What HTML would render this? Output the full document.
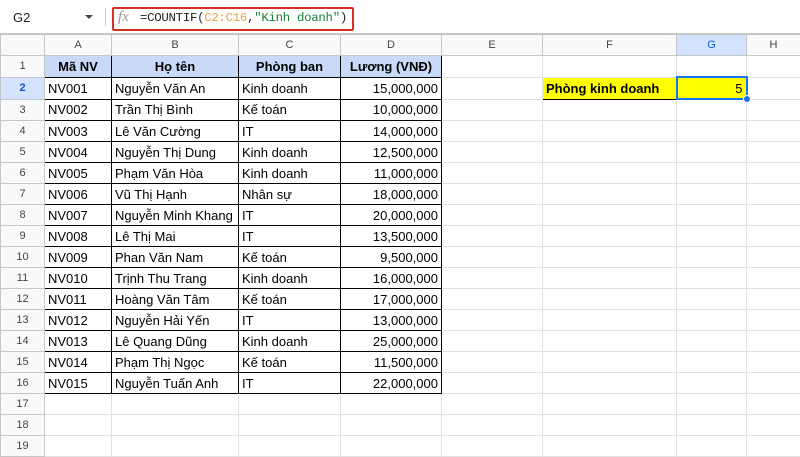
<!DOCTYPE html><html><head><meta charset="utf-8"><style>
body{margin:0;width:800px;height:450px;overflow:hidden;background:#fff;font-family:"Liberation Sans",Arial,sans-serif;position:relative}
.tb{position:absolute;left:0;top:0;width:800px;height:33px;background:#fff;border-bottom:1px solid #c4c7c5}
table{position:absolute;left:0;top:34px;border-collapse:collapse;table-layout:fixed;width:800px}
td{border:1px solid #e1e1e1;height:20px;padding:0 3px;font-size:13px;color:#000;white-space:nowrap;overflow:hidden}
tr.h td{height:20px;background:#f8f9fa;color:#444;font-size:11px;text-align:center;border-color:#c4c7c5}
td.r{background:#f8f9fa;color:#444;font-size:11px;text-align:center;border-color:#c4c7c5;padding:0}
td.b{border:1px solid #000}
td.hd{background:#c9daf8;font-weight:bold;text-align:center;border:1px solid #000}
.n{text-align:right}
</style></head><body>
<div class="tb">
<div style="position:absolute;left:13px;top:10px;font-size:13px;color:#222">G2</div>
<div style="position:absolute;left:85px;top:15px;width:0;height:0;border-left:4px solid transparent;border-right:4px solid transparent;border-top:4px solid #444"></div>
<div style="position:absolute;left:105px;top:8px;width:1px;height:18px;background:#ccc"></div>
<div style="position:absolute;left:112px;top:7px;width:238px;height:20px;border:2px solid #d93025;border-radius:2px"></div>
<div style="position:absolute;left:118px;top:9px;font-family:'Liberation Serif',serif;font-style:italic;color:#999;font-size:15px">fx</div>
<div style="position:absolute;left:140px;top:11px;font-family:'Liberation Mono',monospace;font-size:12.4px;color:#222;letter-spacing:-0.3px">=COUNTIF(<span style="color:#e8a33d">C2:C16</span>,<span style="color:#188038">"Kinh doanh"</span>)</div>
</div>
<table>
<colgroup><col style="width:44px"><col style="width:67px"><col style="width:127px"><col style="width:102px"><col style="width:101px"><col style="width:101px"><col style="width:134px"><col style="width:70px"><col style="width:54px"></colgroup>
<tr class="h"><td></td><td>A</td><td>B</td><td>C</td><td>D</td><td>E</td><td>F</td><td style="background:#d3e3fd;color:#0b57d0">G</td><td>H</td></tr>
<tr><td class="r">1</td><td class="hd">Mã NV</td><td class="hd">Họ tên</td><td class="hd">Phòng ban</td><td class="hd">Lương (VNĐ)</td><td></td><td></td><td></td><td></td></tr>
<tr><td class="r" style="background:#d3e3fd;color:#0b57d0;font-weight:bold">2</td><td class="b">NV001</td><td class="b">Nguyễn Văn An</td><td class="b">Kinh doanh</td><td class="b n">15,000,000</td><td></td><td style="background:#ffff00;border:1px solid #000;font-weight:bold">Phòng kinh doanh</td><td style="background:#ffff00;border:2px solid #1a73e8;text-align:right;position:relative;overflow:visible">5<div style="position:absolute;right:-5px;bottom:-5px;width:6px;height:6px;border-radius:50%;background:#1a73e8;border:1px solid #fff"></div></td><td></td></tr>
<tr><td class="r">3</td><td class="b">NV002</td><td class="b">Trần Thị Bình</td><td class="b">Kế toán</td><td class="b n">10,000,000</td><td></td><td></td><td></td><td></td></tr>
<tr><td class="r">4</td><td class="b">NV003</td><td class="b">Lê Văn Cường</td><td class="b">IT</td><td class="b n">14,000,000</td><td></td><td></td><td></td><td></td></tr>
<tr><td class="r">5</td><td class="b">NV004</td><td class="b">Nguyễn Thị Dung</td><td class="b">Kinh doanh</td><td class="b n">12,500,000</td><td></td><td></td><td></td><td></td></tr>
<tr><td class="r">6</td><td class="b">NV005</td><td class="b">Phạm Văn Hòa</td><td class="b">Kinh doanh</td><td class="b n">11,000,000</td><td></td><td></td><td></td><td></td></tr>
<tr><td class="r">7</td><td class="b">NV006</td><td class="b">Vũ Thị Hạnh</td><td class="b">Nhân sự</td><td class="b n">18,000,000</td><td></td><td></td><td></td><td></td></tr>
<tr><td class="r">8</td><td class="b">NV007</td><td class="b">Nguyễn Minh Khang</td><td class="b">IT</td><td class="b n">20,000,000</td><td></td><td></td><td></td><td></td></tr>
<tr><td class="r">9</td><td class="b">NV008</td><td class="b">Lê Thị Mai</td><td class="b">IT</td><td class="b n">13,500,000</td><td></td><td></td><td></td><td></td></tr>
<tr><td class="r">10</td><td class="b">NV009</td><td class="b">Phan Văn Nam</td><td class="b">Kế toán</td><td class="b n">9,500,000</td><td></td><td></td><td></td><td></td></tr>
<tr><td class="r">11</td><td class="b">NV010</td><td class="b">Trịnh Thu Trang</td><td class="b">Kinh doanh</td><td class="b n">16,000,000</td><td></td><td></td><td></td><td></td></tr>
<tr><td class="r">12</td><td class="b">NV011</td><td class="b">Hoàng Văn Tâm</td><td class="b">Kế toán</td><td class="b n">17,000,000</td><td></td><td></td><td></td><td></td></tr>
<tr><td class="r">13</td><td class="b">NV012</td><td class="b">Nguyễn Hải Yến</td><td class="b">IT</td><td class="b n">13,000,000</td><td></td><td></td><td></td><td></td></tr>
<tr><td class="r">14</td><td class="b">NV013</td><td class="b">Lê Quang Dũng</td><td class="b">Kinh doanh</td><td class="b n">25,000,000</td><td></td><td></td><td></td><td></td></tr>
<tr><td class="r">15</td><td class="b">NV014</td><td class="b">Phạm Thị Ngọc</td><td class="b">Kế toán</td><td class="b n">11,500,000</td><td></td><td></td><td></td><td></td></tr>
<tr><td class="r">16</td><td class="b">NV015</td><td class="b">Nguyễn Tuấn Anh</td><td class="b">IT</td><td class="b n">22,000,000</td><td></td><td></td><td></td><td></td></tr>
<tr><td class="r">17</td><td></td><td></td><td></td><td></td><td></td><td></td><td></td><td></td></tr>
<tr><td class="r">18</td><td></td><td></td><td></td><td></td><td></td><td></td><td></td><td></td></tr>
<tr><td class="r">19</td><td></td><td></td><td></td><td></td><td></td><td></td><td></td><td></td></tr>
</table>
</body></html>
